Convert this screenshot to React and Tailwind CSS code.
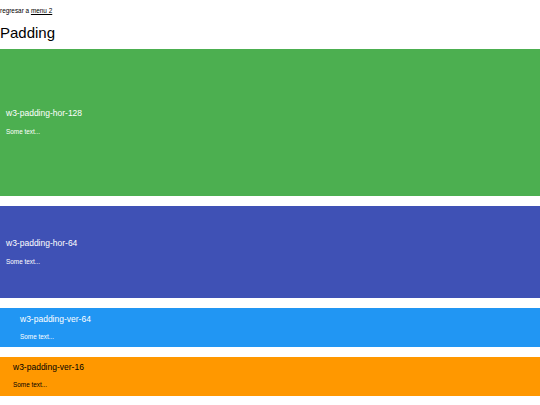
export default function App() {
  const font = { fontFamily: '"Liberation Sans", Arial, sans-serif' };
  return (
    <div className="w-[540px] h-[405px] bg-white overflow-hidden" style={font}>
      <div className="pt-[7px] text-[6.4px] leading-[8px] text-black">
        regresar a <a className="underline text-black" href="#">menu 2</a>
      </div>
      <h2 className="mt-[9px] text-[15px] leading-[18px] text-black font-normal">Padding</h2>
      <div className="mt-[7px] flex flex-col gap-[10px]">
        <div className="bg-[#4CAF50] text-white h-[147px] pl-[6px] pt-[58px]">
          <h3 className="text-[8.5px] leading-[12px] font-normal">w3-padding-hor-128</h3>
          <p className="mt-[9px] text-[6.4px] leading-[8px]">Some text...</p>
        </div>
        <div className="bg-[#3F51B5] text-white h-[92px] pl-[6px] pt-[31px]">
          <h3 className="text-[8.5px] leading-[12px] font-normal">w3-padding-hor-64</h3>
          <p className="mt-[9px] text-[6.4px] leading-[8px]">Some text...</p>
        </div>
        <div className="bg-[#2196F3] text-white h-[39px] pl-[20px] pt-[5px]">
          <h3 className="text-[8.5px] leading-[12px] font-normal">w3-padding-ver-64</h3>
          <p className="mt-[8px] text-[6.4px] leading-[8px]">Some text...</p>
        </div>
        <div className="bg-[#FF9800] text-black h-[39px] pl-[13px] pt-[4px]">
          <h3 className="text-[8.5px] leading-[12px] font-normal">w3-padding-ver-16</h3>
          <p className="mt-[8px] text-[6.4px] leading-[8px]">Some text...</p>
        </div>
      </div>
    </div>
  );
}
